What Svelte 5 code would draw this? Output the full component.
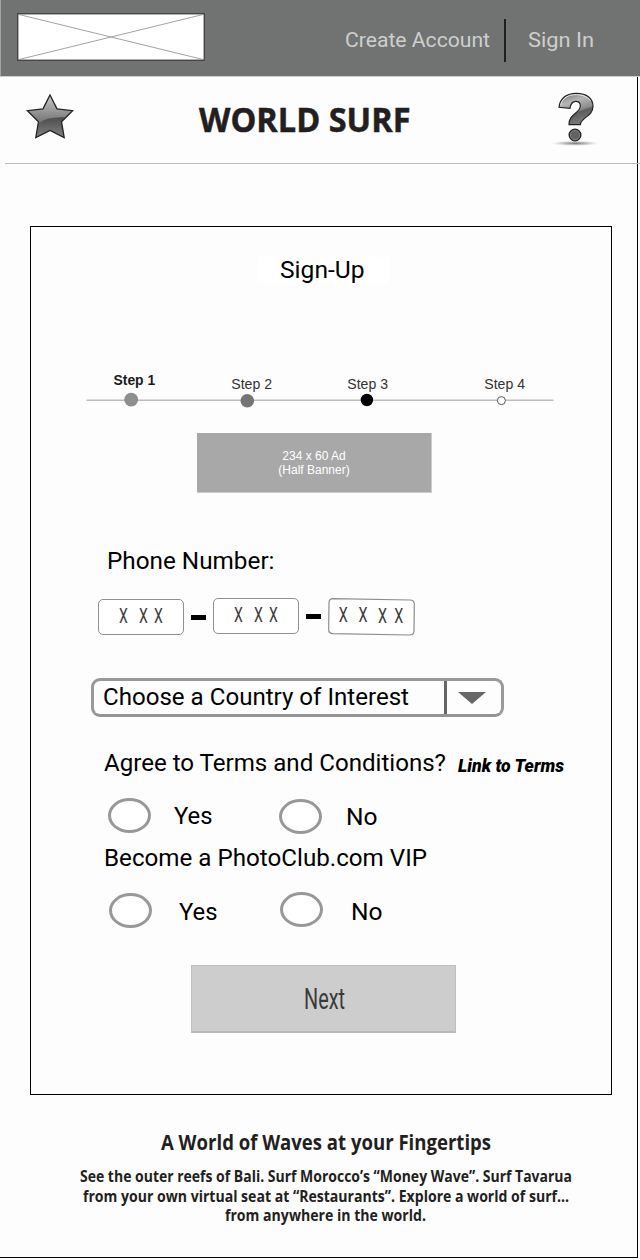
<script>
  const steps = [
    { name: 'Step 1', x: 27.5, y: 20, w: 41.7, cx: 45.2, cy: 34.6, r: 6.9, fill: '#8e8e8e', bold: true },
    { name: 'Step 2', x: 145.3, y: 24, w: 40.7, cx: 161.3, cy: 35.7, r: 6.8, fill: '#757575' },
    { name: 'Step 3', x: 261.3, y: 24, w: 40.7, cx: 280.9, cy: 35, r: 6.2, fill: '#000' },
    { name: 'Step 4', x: 398.3, y: 24, w: 40.7, cx: 415.4, cy: 35.6, r: 4, fill: '#fff', open: true }
  ];
  const copy = [
    ['See the outer reefs of Bali. Surf Morocco’s “Money Wave”. Surf Tavarua', 492],
    ['from your own virtual seat at “Restaurants”. Explore a world of surf…', 486],
    ['from anywhere in the world.', 201]
  ];
</script>

{#snippet line(text, width, size, kind = '')}
  <svg class="line {kind}" {width} height={size} font-size={size}>
    <text x="0" y={size} textLength={width} lengthAdjust="spacingAndGlyphs">{text}</text>
  </svg>
{/snippet}

<div class="page">
  <header>
    <svg class="logo" width="188" height="48" viewBox="0 0 188 48">
      <rect x=".75" y=".75" width="186.5" height="46.5" fill="#fff" stroke="#3d3d3d" stroke-width="1.3" />
      <path d="M2 1.5 186 46.5M2 46.5 186 1.5" stroke="#8c8c8c" stroke-width=".8" />
    </svg>
    <nav>
      {@render line('Create Account', 145, 21, 'pale')}
      <i></i>
      {@render line('Sign In', 66, 21, 'pale')}
    </nav>
  </header>

  <main>
    <section class="masthead">
      <svg class="star" width="50" height="48" viewBox="25 93 50 48">
        <defs>
          <linearGradient id="metal" x1="0" y1="0" x2="0" y2="1">
            <stop offset="0" stop-color="#c8c8c8" />
            <stop offset=".55" stop-color="#808080" />
            <stop offset="1" stop-color="#606060" />
          </linearGradient>
          <linearGradient id="shade" x1="0" y1="0" x2="0" y2="1">
            <stop offset="0" stop-color="#4c4c4c" />
            <stop offset="1" stop-color="#828282" />
          </linearGradient>
        </defs>
        <path d="M50 95 57 108.8 72.6 110.7 61.5 121.7 64.2 137.7 50 130.4 35.8 137.7 38.5 121.7 27.4 110.7 43 108.8Z" fill="url(#metal)" />
        <path d="M38.5 123.5Q46 116.5 64.5 117.2L61.5 121.7 64.2 137.7 50 130.4 35.8 137.7Z" fill="url(#shade)" />
        <path d="M50 95 57 108.8 72.6 110.7 61.5 121.7 64.2 137.7 50 130.4 35.8 137.7 38.5 121.7 27.4 110.7 43 108.8Z" fill="none" stroke="#242424" stroke-width="1.3" />
      </svg>
      {@render line('WORLD SURF', 211.5, 34.5, 'brand title')}
      <svg class="help" width="54" height="58" viewBox="688 270 162 174">
        <defs>
          <linearGradient id="q" x1="0" y1="0" x2=".35" y2="1">
            <stop offset="0" stop-color="#696969" />
            <stop offset=".35" stop-color="#b5b5b5" />
            <stop offset=".65" stop-color="#8c8c8c" />
            <stop offset=".72" stop-color="#5c5c5c" />
            <stop offset="1" stop-color="#777" />
          </linearGradient>
          <radialGradient id="floor">
            <stop offset="0" stop-color="#777" />
            <stop offset=".5" stop-color="#bbb" stop-opacity=".8" />
            <stop offset="1" stop-color="#fdfdfd" stop-opacity="0" />
          </radialGradient>
        </defs>
        <ellipse cx="767" cy="430" rx="80" ry="9" fill="url(#floor)" />
        <path d="M718 322C721 294 742 280 770 280C802 280 820 296 820 319C820 350 784 351 782 374L748 374C746 343 782 339 782 318C782 309 776 304 768 304C758 304 753 312 751 325Z" fill="url(#q)" stroke="#222" stroke-width="3.5" />
        <path d="M723 315C728 294 745 284 770 284C790 284 805 291 812 302" fill="none" stroke="#e8e8e8" stroke-width="3" />
        <circle cx="766" cy="405" r="17.5" fill="#626262" stroke="#222" stroke-width="4" />
        <circle cx="766" cy="405" r="14" fill="none" stroke="#999" stroke-width="1.5" />
      </svg>
    </section>

    <form class="card">
      <div class="heading">{@render line('Sign-Up', 84.5, 24)}</div>

      <svg class="stepper" width="468" height="45">
        <path d="M.5 35.2H467.5" stroke="#bdbdbd" stroke-width="1.6" />
        {#each steps as s}
          <text x={s.x} y={s.y} textLength={s.w} lengthAdjust="spacingAndGlyphs" class:bold={s.bold}>{s.name}</text>
          <circle cx={s.cx} cy={s.cy} r={s.r} fill={s.fill} stroke={s.open ? '#555' : 'none'} />
        {/each}
      </svg>

      <div class="ad"><span>234 x 60 Ad</span><span>(Half Banner)</span></div>

      <div class="caption">{@render line('Phone Number:', 167.5, 24)}</div>
      <div class="phone">
        <div class="field first"><b>X</b><b>X</b><b>X</b></div>
        <i></i>
        <div class="field"><b>X</b><b>X</b><b>X</b></div>
        <i></i>
        <svg width="87" height="38" viewBox="0 0 87 38">
          <path d="M5 .7 82 2Q86.3 2.2 86.3 6L86 33Q86 37 81.5 37L5 35.7Q.7 35.5 .7 31.5L1 5Q1 .8 5 .7Z" fill="#fff" stroke="#8c8c8c" stroke-width="1.2" />
          <g font-size="19.5">
            <text x="10.7" y="23.5" textLength="9" lengthAdjust="spacingAndGlyphs">X</text>
            <text x="30.5" y="24.3" textLength="9" lengthAdjust="spacingAndGlyphs">X</text>
            <text x="50" y="24.5" textLength="9" lengthAdjust="spacingAndGlyphs">X</text>
            <text x="66.3" y="24.5" textLength="9" lengthAdjust="spacingAndGlyphs">X</text>
          </g>
        </svg>
      </div>

      <div class="select">
        <div class="value">{@render line('Choose a Country of Interest', 306, 24)}</div>
        <div class="arrow"><svg width="28" height="12"><path d="M0 0H28L14 12Z" fill="#666" /></svg></div>
      </div>

      <div class="terms">
        {@render line('Agree to Terms and Conditions?', 342, 24)}
        {@render line('Link to Terms', 106, 17.5, 'link')}
      </div>
      <div class="choices">
        <span class="radio"></span>
        <div class="yes">{@render line('Yes', 38.5, 24)}</div>
        <span class="radio low"></span>
        <div class="no">{@render line('No', 31.5, 24)}</div>
      </div>
      <div class="vip">{@render line('Become a PhotoClub.com VIP', 323, 24)}</div>
      <div class="choices second">
        <span class="radio low"></span>
        <div class="yes">{@render line('Yes', 38.5, 24)}</div>
        <span class="radio"></span>
        <div class="no">{@render line('No', 31.5, 24)}</div>
      </div>

      <button type="button">{@render line('Next', 41, 30, 'next')}</button>
    </form>

    <footer>
      {@render line('A World of Waves at your Fingertips', 330, 20.5, 'brand')}
      <div class="copy">
        {#each copy as [text, width]}
          {@render line(text, width, 15.5, 'brand')}
        {/each}
      </div>
    </footer>
  </main>
</div>

<style>
  :global(body) { background: #fdfdfd; }
  .page, .page * { box-sizing: border-box; }
  .page { width: 640px; height: 1260px; overflow: hidden; font-family: Roboto, sans-serif; color: #000; background: #fdfdfd; }
  svg { display: block; flex: none; }
  .line { overflow: visible; fill: #000; }
  .pale { fill: #cdcfce; }
  .brand { fill: #231f20; font-family: "Open Sans", "Noto Sans", sans-serif; font-weight: 700; }
  .title { margin: 20px 0 0 124px; stroke: #231f20; stroke-width: .5; }
  .link { font-weight: 900; font-style: italic; }
  .next { fill: #3a3a3a; }

  header { height: 77px; display: flex; justify-content: space-between; background: #717372; border-bottom: 1px solid #cfcfcf; border-left: 1px solid #a3a3a3; padding: 13px 46px 0 16px; }
  nav { display: flex; padding-top: 6px; }
  nav .line { margin-top: 7px; }
  nav i { width: 2px; height: 43px; background: #231f20; margin: 0 22px 0 14.5px; }

  main { width: 638px; height: 1181px; border: solid #000; border-width: 0 1px 1px 0; }
  .masthead { height: 87px; margin-left: 5px; width: 635px; border-bottom: 1px solid #bcbcbc; display: flex; align-items: flex-start; }
  .star { margin: 16px 0 0 20px; }
  .help { margin: 13px 0 0 138.5px; }

  .card { width: 582px; height: 869px; margin: 62px 0 0 30px; border: 1px solid #000; padding-top: 30px; }
  .heading { display: flex; width: 131px; height: 26px; margin-left: 227px; padding-left: 21.5px; background: #fff; }
  .heading .line { margin-top: -3px; }
  .stepper { margin: 82px 0 0 55px; font: 14px "Liberation Sans", Arial, sans-serif; fill: #333; }
  .bold { font-weight: 700; fill: #1c1a1b; }
  .ad { width: 235px; height: 60px; margin: 23px 0 0 166px; padding-top: 16px; background: #a8a8a8; border: solid #ccc; border-width: 0 1px 1px 0; color: #fff; font: 12px/14px "Liberation Sans", Arial, sans-serif; display: flex; flex-direction: column; align-items: center; }

  .caption { margin: 52px 0 0 76px; }
  .phone { display: flex; margin: 29px 0 0 66.5px; height: 37px; }
  .phone i { width: 15px; height: 5px; margin: 16px 6.5px 0 7.5px; background: #000; }
  .phone > i:first-of-type { margin-top: 17px; }
  .phone svg text { fill: #3b3b3b; }
  .field { width: 86px; height: 36px; padding: 5px 0 0 20.5px; border: 1px solid #909090; border-radius: 5px; display: flex; background: #fff; }
  .first { margin-top: 1px; }
  .field b { width: 8px; margin-right: 11.5px; font: 400 19.5px/24px Roboto, sans-serif; color: #3b3b3b; transform: scaleX(.72); transform-origin: 0 50%; }
  .field b:nth-child(2) { margin-right: 7.5px; }

  .select { display: flex; width: 413px; height: 39px; margin: 43px 0 0 60px; border: 3px solid #999; border-bottom-color: #949494; border-radius: 9px; }
  .value { width: 353px; padding: 0 0 0 9px; border-right: 3px solid #666; }
  .arrow { padding: 11px 0 0 11px; }

  .terms { display: flex; align-items: flex-end; gap: 12px; height: 24px; margin: 30px 0 0 73px; }
  .choices { display: flex; height: 36px; margin: 27px 0 0 76.5px; }
  .radio { width: 43px; height: 35px; border: 3px solid #989898; border-radius: 50%; background: #fff; flex: none; }
  .low { margin-top: 1px; }
  .yes { width: 128px; padding: 2px 0 0 23.5px; }
  .no { padding: 3px 0 0 24px; }
  .vip { margin: 8px 0 0 73px; }
  .second { height: 37px; margin: 26px 0 0 77.5px; }
  .second .yes { padding: 4px 0 0 27.5px; }
  .second .no { padding: 4px 0 0 28px; }

  button { display: flex; align-items: flex-start; width: 265px; height: 68px; margin: 36px 0 0 160px; padding: 13px 0 0 111.5px; border: 1px solid #bfbfbf; border-bottom: 2px solid #b9b9b9; border-radius: 0; background: #cdcdcd; font-family: inherit; }

  footer { display: flex; flex-direction: column; align-items: center; padding: 33.5px 0 0 14px; }
  .copy { display: flex; flex-direction: column; align-items: center; gap: 4px; padding-top: 17px; }
</style>
